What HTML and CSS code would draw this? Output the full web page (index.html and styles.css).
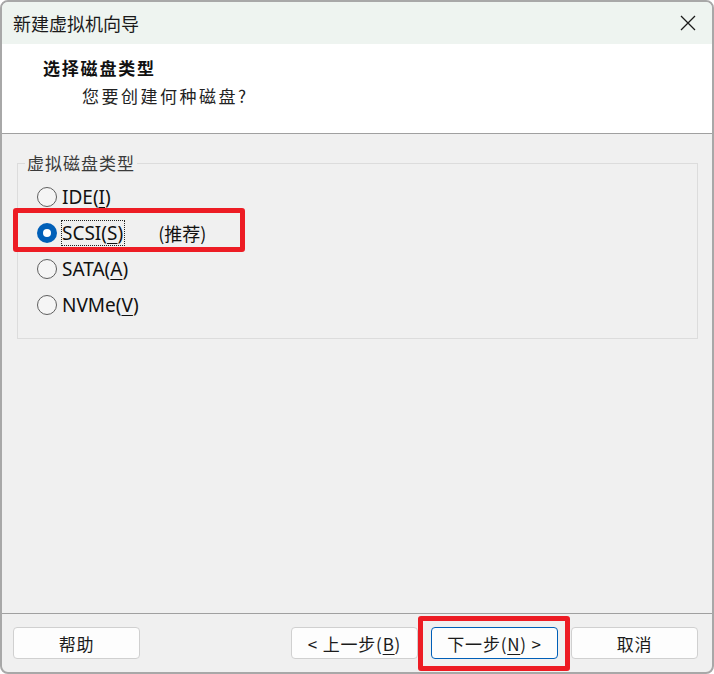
FILE: index.html
```html
<!DOCTYPE html>
<html lang="zh-CN">
<head>
<meta charset="utf-8">
<title>新建虚拟机向导</title>
<link rel="stylesheet" href="styles.css">
</head>
<body>
<div class="window">
  <div class="titlebar">
    <span class="title">新建虚拟机向导</span>
    <svg class="close" width="16" height="16" viewBox="0 0 16 16"><path d="M1 1 L15 15 M15 1 L1 15" stroke="#1a1a1a" stroke-width="1.3" fill="none"/></svg>
  </div>
  <div class="header">
    <div class="h-title">选择磁盘类型</div>
    <div class="h-sub">您要创建何种磁盘?</div>
  </div>
  <div class="content">
    <fieldset class="group">
      <legend class="legend">虚拟磁盘类型</legend>
      <div class="option"><span class="radio"></span><span class="label">IDE(<u>I</u>)</span></div>
      <div class="option"><span class="radio checked"></span><span class="label focus">SCSI(<u>S</u>)</span><span class="note">(推荐)</span></div>
      <div class="option"><span class="radio"></span><span class="label">SATA(<u>A</u>)</span></div>
      <div class="option"><span class="radio"></span><span class="label">NVMe(<u>V</u>)</span></div>
    </fieldset>
  </div>
  <div class="footer">
    <button class="btn">帮助</button>
    <div class="spacer"></div>
    <button class="btn">&lt; 上一步(<u>B</u>)</button>
    <button class="btn default">下一步(<u>N</u>) &gt;</button>
    <button class="btn">取消</button>
  </div>
  <div class="mark mark-scsi"></div>
  <div class="mark mark-next"></div>
</div>
</body>
</html>
```

FILE: styles.css
```css
* { box-sizing: border-box; }
html, body { margin: 0; padding: 0; background: #ffffff; }
body {
  font-family: "Noto Sans CJK SC", "Noto Sans", sans-serif;
  color: #1b1b1b;
}
.window {
  position: relative;
  width: 714px;
  height: 674px;
  border: 2px solid #a8a8a8;
  border-radius: 8px;
  background: #f0f0f0;
  display: flex;
  flex-direction: column;
  overflow: hidden;
}
.titlebar {
  height: 42px;
  flex: none;
  background: #eef4f0;
  display: flex;
  align-items: center;
  padding-left: 11px;
}
.title {
  font-size: 18px;
  line-height: 24px;
  flex: 1;
  color: #1a1a1a;
}
.close { margin-right: 16px; }
.header {
  height: 90px;
  flex: none;
  background: #ffffff;
  border-bottom: 1px solid #a0a0a0;
  padding: 12px 0 0 41px;
}
.h-title {
  font-size: 17px;
  line-height: 24px;
  font-weight: bold;
  letter-spacing: 1.8px;
  color: #111;
}
.h-sub {
  font-size: 17px;
  line-height: 24px;
  margin-top: 4px;
  margin-left: 39px;
  letter-spacing: 2.5px;
  color: #222;
}
.content {
  flex: 1;
  padding: 17px 14px 0 15px;
}
.group {
  margin: 0;
  border: 1px solid #dcdcdc;
  padding: 4px 0 15px 7px;
  min-width: 0;
}
.legend {
  padding: 0 2px;
  font-size: 17px;
  line-height: 24px;
  letter-spacing: 1px;
  color: #3a3a3a;
}
.option {
  height: 36px;
  display: flex;
  align-items: center;
  padding-left: 12px;
  font-family: "Noto Sans", "Noto Sans CJK SC", sans-serif;
  font-size: 19px;
}
.radio {
  width: 20px;
  height: 20px;
  border-radius: 50%;
  border: 1px solid #5f5f5f;
  background: #f5f5f5;
  flex: none;
  display: flex;
  align-items: center;
  justify-content: center;
}
.radio.checked {
  border: none;
  background: #005fb8;
}
.radio.checked::after {
  content: "";
  width: 8px;
  height: 8px;
  border-radius: 50%;
  background: #ffffff;
}
.label {
  margin-left: 4px;
  border: 1px dotted transparent;
  padding: 0 1px 0 0;
  line-height: 24px;
  color: #111;
}
.label.focus { border-color: #222; }
.label u { text-underline-offset: 3px; }
.note {
  margin-left: 33px;
  font-family: "Noto Sans CJK SC", sans-serif;
  font-size: 18px;
  color: #111;
}
.footer {
  height: 59px;
  flex: none;
  border-top: 1px solid #a0a0a0;
  padding: 13px 14px 13px 11px;
  display: flex;
  gap: 13px;
}
.spacer { flex: 1; }
.btn {
  width: 127px;
  height: 32px;
  border: 1px solid #d0d0d0;
  border-radius: 4px;
  background: #fdfdfd;
  font-family: "Noto Sans CJK SC", "Noto Sans", sans-serif;
  font-size: 17px;
  color: #1b1b1b;
  padding: 0;
  letter-spacing: 0.8px;
}
.btn u { text-underline-offset: 3px; }
.btn.default { border-color: #005fb8; }
.mark {
  position: absolute;
  border: 5px solid #ed1c24;
  border-radius: 3px;
}
.mark-scsi { left: 11px; top: 206px; width: 232px; height: 44px; }
.mark-next { left: 416px; top: 614px; width: 152px; height: 55px; }
```
